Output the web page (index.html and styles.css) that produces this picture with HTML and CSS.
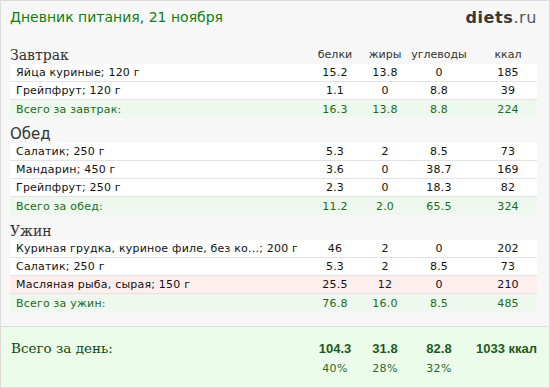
FILE: index.html
```html
<!DOCTYPE html>
<html lang="ru">
<head>
<meta charset="utf-8">
<title>Дневник питания</title>
<link rel="stylesheet" href="styles.css">
</head>
<body>
<div class="page">
  <header class="top">
    <h1 class="title">Дневник питания, 21 ноября</h1>
    <div class="logo"><b>diets</b>.ru</div>
  </header>

  <section class="meal">
    <div class="grid head">
      <h2 class="meal-name serif">Завтрак</h2>
      <span class="c">белки</span><span class="c">жиры</span><span class="c">углеводы</span><span class="c kcal">ккал</span>
    </div>
    <div class="grid row"><span class="name">Яйца куриные; 120 г</span><span class="c">15.2</span><span class="c">13.8</span><span class="c">0</span><span class="c kcal">185</span></div>
    <div class="grid row"><span class="name">Грейпфрут; 120 г</span><span class="c">1.1</span><span class="c">0</span><span class="c">8.8</span><span class="c kcal">39</span></div>
    <div class="grid row total"><span class="name">Всего за завтрак:</span><span class="c">16.3</span><span class="c">13.8</span><span class="c">8.8</span><span class="c kcal">224</span></div>
  </section>

  <section class="meal">
    <div class="grid head">
      <h2 class="meal-name sans">Обед</h2>
    </div>
    <div class="grid row"><span class="name">Салатик; 250 г</span><span class="c">5.3</span><span class="c">2</span><span class="c">8.5</span><span class="c kcal">73</span></div>
    <div class="grid row"><span class="name">Мандарин; 450 г</span><span class="c">3.6</span><span class="c">0</span><span class="c">38.7</span><span class="c kcal">169</span></div>
    <div class="grid row"><span class="name">Грейпфрут; 250 г</span><span class="c">2.3</span><span class="c">0</span><span class="c">18.3</span><span class="c kcal">82</span></div>
    <div class="grid row total"><span class="name">Всего за обед:</span><span class="c">11.2</span><span class="c">2.0</span><span class="c">65.5</span><span class="c kcal">324</span></div>
  </section>

  <section class="meal">
    <div class="grid head">
      <h2 class="meal-name serif">Ужин</h2>
    </div>
    <div class="grid row"><span class="name">Куриная грудка, куриное филе, без ко...; 200 г</span><span class="c">46</span><span class="c">2</span><span class="c">0</span><span class="c kcal">202</span></div>
    <div class="grid row"><span class="name">Салатик; 250 г</span><span class="c">5.3</span><span class="c">2</span><span class="c">8.5</span><span class="c kcal">73</span></div>
    <div class="grid row warn"><span class="name">Масляная рыба, сырая; 150 г</span><span class="c">25.5</span><span class="c">12</span><span class="c">0</span><span class="c kcal">210</span></div>
    <div class="grid row total"><span class="name">Всего за ужин:</span><span class="c">76.8</span><span class="c">16.0</span><span class="c">8.5</span><span class="c kcal">485</span></div>
  </section>
</div>

<footer class="day">
  <div class="grid day-sum">
    <span class="day-label">Всего за день:</span>
    <span class="c big">104.3</span><span class="c big">31.8</span><span class="c big">82.8</span><span class="big kcal-total">1033 ккал</span>
  </div>
  <div class="grid day-pct">
    <span></span>
    <span class="c">40%</span><span class="c">28%</span><span class="c">32%</span><span></span>
  </div>
</footer>
</body>
</html>
```

FILE: styles.css
```css
* { box-sizing: border-box; }

html, body { margin: 0; padding: 0; }

body {
  width: 550px;
  height: 388px;
  border: 1px solid #dcdcdc;
  background: #f7f7f7;
  font-family: "DejaVu Sans", Verdana, sans-serif;
  font-size: 11px;
  color: #111;
  display: flex;
  flex-direction: column;
  overflow: hidden;
}

.page {
  padding: 5px 12px 0 9px;
}

.top {
  display: flex;
  justify-content: space-between;
  align-items: flex-start;
  height: 40px;
}

.title {
  margin: 0;
  padding-top: 2px;
  font-size: 14px;
  line-height: 19px;
  font-weight: normal;
  color: #0f800f;
}

.logo {
  font-size: 16px;
  line-height: 19px;
  padding-top: 2px;
  letter-spacing: 0.6px;
  color: #555;
}

.logo b {
  color: #383838;
  font-weight: bold;
}

.grid {
  display: grid;
  grid-template-columns: 1fr 50px 50px 58px 69px;
  align-items: end;
}

.c {
  text-align: center;
}

.kcal {
  padding-left: 11px;
}

.meal + .meal {
  margin-top: 7px;
}

.head {
  height: 18px;
  color: #333;
  line-height: 14px;
  padding-bottom: 2px;
}

.meal-name {
  margin: 0;
  font-weight: normal;
  color: #333;
  line-height: 18px;
  margin-bottom: -2px;
}

.meal-name.serif {
  font-family: "DejaVu Serif", Georgia, serif;
  font-size: 14px;
}

.meal-name.sans {
  font-family: "DejaVu Sans", Verdana, sans-serif;
  font-size: 15px;
}

.row {
  height: 18px;
  line-height: 17px;
  background: #fff;
  border-bottom: 1px solid #e3e3e3;
  letter-spacing: 0.2px;
}

.row .name {
  padding-left: 6px;
  white-space: nowrap;
  overflow: hidden;
}

.row.warn {
  background: #ffeeee;
}

.row.total {
  background: #eef8ee;
  color: #1b6b1b;
  border-bottom: 0;
}

.day {
  margin-top: auto;
  height: 61px;
  border-top: 1px solid #dcdcdc;
  background: #ebfdea;
  padding: 12px 12px 0 10px;
  color: #144f14;
}

.day-sum {
  align-items: baseline;
}

.day-label {
  font-family: "DejaVu Serif", Georgia, serif;
  font-size: 13.5px;
  line-height: 18px;
  color: #0e4a0e;
}

.big {
  font-family: "Liberation Sans", Arial, sans-serif;
  font-weight: bold;
  font-size: 13px;
  color: #1c5a1c;
}

.kcal-total {
  text-align: right;
}

.day-pct {
  margin-top: 5px;
  color: #2c662c;
  line-height: 14px;
  letter-spacing: 0.3px;
}
```
